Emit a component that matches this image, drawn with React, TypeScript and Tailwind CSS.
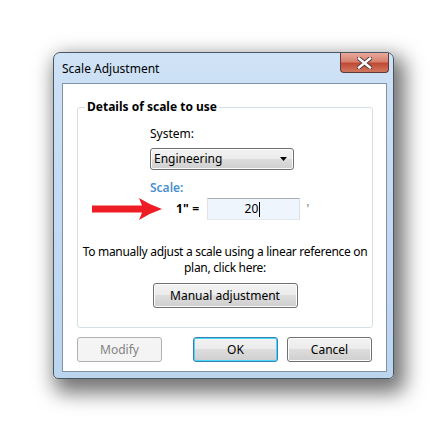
import React from "react";

const font = { fontFamily: '"Noto Sans", "Open Sans", Arial, sans-serif' };

function WinButton({
  children,
  width,
  variant = "normal",
}: {
  children: React.ReactNode;
  width: string;
  variant?: "normal" | "default" | "disabled";
}) {
  const base =
    "h-[25px] rounded-[3px] border text-[12px] flex items-center justify-center";
  if (variant === "disabled") {
    return (
      <div className={`${base} ${width} border-[#adb2b5] bg-[#f4f4f4] text-[#838383]`}>
        {children}
      </div>
    );
  }
  if (variant === "default") {
    return (
      <div
        className={`${base} ${width} border-[#3c7fb1] text-black bg-[linear-gradient(to_bottom,#f2f2f2_0%,#ebebeb_50%,#dddddd_50%,#cfcfcf_100%)] shadow-[inset_0_0_0_1px_#48d8fb]`}
      >
        {children}
      </div>
    );
  }
  return (
    <div
      className={`${base} ${width} border-[#707070] text-black bg-[linear-gradient(to_bottom,#f2f2f2_0%,#ebebeb_50%,#dddddd_50%,#cfcfcf_100%)] shadow-[inset_0_0_0_1px_#fcfcfc]`}
    >
      {children}
    </div>
  );
}

export default function App() {
  return (
    <div className="w-[447px] h-[432px] bg-white pt-[52px] pl-[53px]" style={font}>
      <div className="relative w-[341px] h-[327px] rounded-t-[7px] rounded-b-[5px] border border-[#4b5663] bg-[linear-gradient(to_bottom,#cfe2f6_0%,#c3dbf3_40%,#bcd5ef_100%)] shadow-[6px_9px_20px_5px_rgba(0,0,0,0.55)] flex flex-col">
        {/* Title bar */}
        <div className="h-[30px] flex items-center pl-[8px] text-[12px] text-black pt-[1px]">
          Scale Adjustment
        </div>
        {/* Close button */}
        <div className="absolute top-[0px] right-[4px] w-[49px] h-[20px] rounded-b-[4px] border border-t-0 border-[#5d3a3a] bg-[linear-gradient(to_bottom,#e9a99c_0%,#d7826f_45%,#c04a36_55%,#d1775f_100%)] flex items-center justify-center">
          <svg width="15" height="12" viewBox="0 0 15 12">
            <path
              d="M2 1.5 L13 10.5 M13 1.5 L2 10.5"
              stroke="#4a3434"
              strokeWidth="4.2"
              strokeLinecap="square"
            />
            <path
              d="M2 1.5 L13 10.5 M13 1.5 L2 10.5"
              stroke="#ffffff"
              strokeWidth="2.4"
              strokeLinecap="square"
            />
          </svg>
        </div>
        {/* Client area */}
        <div className="ml-[8px] w-[325px] h-[289px] border border-[#8293a5] bg-white pt-[15px] px-[14px]">
          <fieldset className="w-[296px] border border-[#d5dfe5] rounded-[3px] pb-[19px] m-0 p-0">
            <legend className="ml-[7px] px-[2px] text-[12px] leading-[16px] font-bold text-black">
              Details of scale to use
            </legend>
            <div className="pl-[72px]">
              <div className="mt-[11px] text-[12px] leading-[16px] text-black">System:</div>
              <div className="mt-[6px] w-[144px] h-[22px] rounded-[3px] border border-[#707070] bg-[linear-gradient(to_bottom,#f2f2f2_0%,#ebebeb_50%,#dddddd_50%,#cfcfcf_100%)] shadow-[inset_0_0_0_1px_#fbfbfb] flex items-center justify-between pl-[3px] pr-[6px] text-[12px] text-black">
                <span>Engineering</span>
                <svg width="7" height="4" viewBox="0 0 7 4">
                  <path d="M0 0 H7 L3.5 4 Z" fill="#000" />
                </svg>
              </div>
              <div className="mt-[10px] text-[12px] leading-[16px] font-semibold text-[#4a8fd0]">
                Scale:
              </div>
            </div>
            <div className="mt-[2px] h-[22px] flex items-center pl-[14px]">
              <svg width="71" height="24" viewBox="0 0 71 24" className="shrink-0">
                <path
                  d="M0 8.5 H50 L47 1 Q58 8 70 12 Q58 16 47 23 L50 15.5 H0 Z"
                  fill="#ee1c25"
                />
              </svg>
              <span className="ml-[13px] text-[12px] font-bold text-black tracking-[0.2px]">1" =</span>
              <div className="ml-[8px] w-[93px] h-[22px] border border-[#abadb3] border-l-[#e2e3ea] border-r-[#dbdfe6] border-b-[#e3e9ef] bg-[#eef5fc] flex items-center justify-center text-[12px] text-black">
                <span className="ml-[-3px]">20</span>
                <span className="inline-block w-[1px] h-[15px] bg-black ml-[1px]" />
              </div>
              <span className="ml-[6px] text-[12px] text-[#707070]">'</span>
            </div>
            <div className="mt-[24px] text-center text-[12px] text-black whitespace-nowrap tracking-[-0.3px]">
              <div className="leading-[16px]">To manually adjust a scale using a linear reference on</div>
              <div className="leading-[16px]">plan, click here:</div>
            </div>
            <div className="mt-[7px] flex justify-center">
              <WinButton width="w-[145px]">Manual adjustment</WinButton>
            </div>
          </fieldset>
          <div className="mt-[9px] flex">
            <WinButton width="w-[85px]" variant="disabled">
              Modify
            </WinButton>
            <div className="ml-[31px]">
              <WinButton width="w-[85px]" variant="default">
                OK
              </WinButton>
            </div>
            <div className="ml-[9px]">
              <WinButton width="w-[85px]">Cancel</WinButton>
            </div>
          </div>
        </div>
      </div>
    </div>
  );
}
